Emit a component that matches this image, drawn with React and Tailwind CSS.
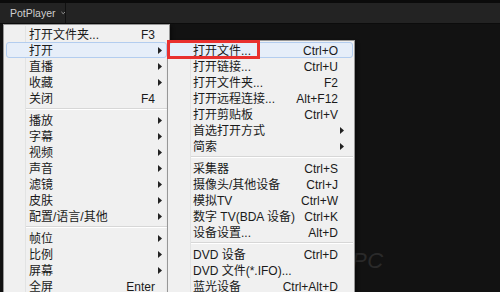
import React from 'react';

// --- menu data ---
const MAIN = [
  { label: '打开文件夹...', key: 'F3' },
  { label: '打开', sub: true, active: true },
  { label: '直播', sub: true },
  { label: '收藏', sub: true },
  { label: '关闭', key: 'F4' },
  { sep: true },
  { label: '播放', sub: true },
  { label: '字幕', sub: true },
  { label: '视频', sub: true },
  { label: '声音', sub: true },
  { label: '滤镜', sub: true },
  { label: '皮肤', sub: true },
  { label: '配置/语言/其他', sub: true },
  { sep: true },
  { label: '帧位', sub: true },
  { label: '比例', sub: true },
  { label: '屏幕', sub: true },
  { label: '全屏', key: 'Enter' },
];

const OPEN = [
  { label: '打开文件...', key: 'Ctrl+O', active: true },
  { label: '打开链接...', key: 'Ctrl+U' },
  { label: '打开文件夹...', key: 'F2' },
  { label: '打开远程连接...', key: 'Alt+F12' },
  { label: '打开剪贴板', key: 'Ctrl+V' },
  { label: '首选打开方式', sub: true },
  { label: '简索', sub: true },
  { sep: true },
  { label: '采集器', key: 'Ctrl+S' },
  { label: '摄像头/其他设备', key: 'Ctrl+J' },
  { label: '模拟TV', key: 'Ctrl+W' },
  { label: '数字 TV(BDA 设备)', key: 'Ctrl+K' },
  { label: '设备设置...', key: 'Alt+D' },
  { sep: true },
  { label: 'DVD 设备', key: 'Ctrl+D' },
  { label: 'DVD 文件(*.IFO)...' },
  { label: '蓝光设备', key: 'Ctrl+Alt+D' },
];

const Arrow = () => (
  <svg width="4" height="7" viewBox="0 0 4 7" className="block"><path d="M0 0L4 3.5L0 7z" fill="#222" /></svg>
);

// Win7-style popup list: gutter line, rows of 16px, 6px separators
const MenuList = ({ items, gutter, sepIndent, textPad, keyPad, arrowPad }) => (
  <div className="relative">
    <div className={`absolute top-0 bottom-0 w-px bg-[#e2e3e3] ${gutter}`} />
    {items.map((it, i) =>
      it.sep ? (
        <div key={i} className={`h-[6px] flex flex-col justify-center ${sepIndent}`}>
          <div className="h-px bg-[#d7d7d7]" />
          <div className="h-px bg-white" />
        </div>
      ) : (
        <div
          key={i}
          className={`relative h-[16px] flex items-center rounded-[3px] border ${it.active ? 'border-[#b3cdef] bg-[#e6eef9]' : 'border-transparent'}`}
        >
          <span className={`flex-1 pt-px text-[#1a1a1a] whitespace-nowrap ${textPad}`}>{it.label}</span>
          {it.key && <span className={`pt-px text-[#1a1a1a] ${keyPad}`}>{it.key}</span>}
          {it.sub && <span className={arrowPad}><Arrow /></span>}
        </div>
      )
    )}
  </div>
);

export default function App() {
  return (
    <div
      className="relative w-[500px] h-[292px] overflow-hidden bg-[#121212] text-[12px] leading-none"
      style={{ fontFamily: '"Liberation Sans", "Noto Sans CJK SC", sans-serif' }}
    >
      {/* title bar */}
      <div className="h-[3px] bg-[#0b0b0b]" />
      <div className="h-[21px] bg-[#232323] flex items-center border-b border-[#0c0c0c]">
        <div className="h-full w-[66px] flex items-center pl-[10px] border-r border-[#111] gap-[5px]">
          <span className="text-[#cfcfcf] text-[10.5px]">PotPlayer</span>
          <svg width="6" height="4" viewBox="0 0 6 4"><path d="M0.5 0.5L3 3L5.5 0.5" stroke="#bdbdbd" strokeWidth="1" fill="none" /></svg>
        </div>
      </div>

      {/* faint logo text on the canvas */}
      <div className="absolute left-[352px] top-[250px] text-[#2a2a2a] text-[22px] italic tracking-wide select-none">PC</div>

      {/* main popup menu */}
      <div className="absolute left-[3px] top-[24px] w-[167px] h-[290px] bg-[#f0f0f0] border border-[#979797] px-[2px] pt-[1px] shadow-[2px_2px_3px_rgba(0,0,0,0.4)]">
        <MenuList
          items={MAIN}
          gutter="left-[19px]"
          sepIndent="ml-[20px]"
          textPad="pl-[22px]"
          keyPad="pr-[11px]"
          arrowPad="pr-[4px]"
        />
      </div>

      {/* 打开 submenu */}
      <div className="absolute left-[167px] top-[40px] w-[188px] h-[260px] bg-[#f0f0f0] border border-[#979797] px-[1px] pt-[1px] shadow-[2px_2px_3px_rgba(0,0,0,0.4)]">
        <MenuList
          items={OPEN}
          gutter="left-[21px]"
          sepIndent="ml-[22px]"
          textPad="pl-[23px]"
          keyPad="pr-[14px]"
          arrowPad="pr-[8px]"
        />
      </div>

      {/* red annotation box */}
      <div className="absolute left-[167px] top-[40px] w-[93px] h-[19px] border-[3px] border-[#e8302e] pointer-events-none" />
    </div>
  );
}
